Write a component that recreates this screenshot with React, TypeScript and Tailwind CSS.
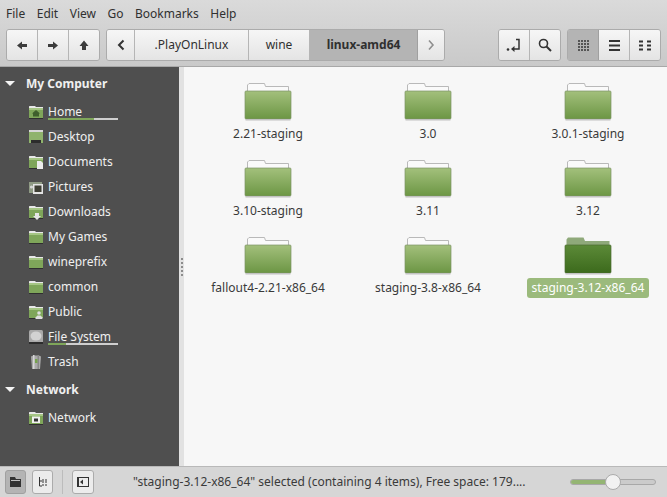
import React from "react";

const font = { fontFamily: '"Noto Sans", sans-serif' };

function Folder({ selected = false }: { selected?: boolean }) {
  const id = selected ? "fs" : "fn";
  return (
    <svg width="48" height="38" viewBox="0 0 48 38" className="block">
      <defs>
        <linearGradient id={id} x1="0" y1="0" x2="0" y2="1">
          <stop offset="0" stopColor={selected ? "#5c8a38" : "#a3c07c"} />
          <stop offset="1" stopColor={selected ? "#3c6a1c" : "#6c9644"} />
        </linearGradient>
      </defs>
      {selected ? (
        <path d="M2.5 9V2.5L4 0.5H19.5L21 4H45.5V9Z" fill="#8fa97a" />
      ) : (
        <path d="M3.5 9V2L5 0.5H20.5L21.5 3.5H44.5V9Z" fill="#fafafa" stroke="#b9b9b9" strokeWidth="1" />
      )}
      <rect x="1" y="8" width="46" height="28" rx="1" fill={`url(#${id})`} stroke={selected ? "#4a6b30" : "#7c9464"} strokeWidth="0.7" />
      <rect x="1.5" y="36" width="45" height="1.5" fill="#c2c2c2" />
    </svg>
  );
}

function SideFolder({ overlay }: { overlay?: React.ReactNode }) {
  return (
    <svg width="16" height="16" viewBox="0 0 16 16" className="block shrink-0">
      <path d="M1 5V2.5L1.5 2H7L8 3H15V5Z" fill="#e8e8e8" />
      <rect x="1" y="4" width="14" height="10" fill="#7fa65a" />
      <rect x="1" y="4" width="14" height="2" fill="#a5c584" />
      <rect x="1" y="14" width="14" height="1" fill="#2f2f2f" />
      {overlay}
    </svg>
  );
}

const icons: Record<string, React.ReactNode> = {
  Home: <SideFolder overlay={<path d="M8 6L12 9.5H11V12.5H5V9.5H4Z" fill="#3f5f2c" />} />,
  Desktop: (
    <svg width="16" height="16" viewBox="0 0 16 16" className="block shrink-0">
      <rect x="1" y="1" width="14" height="2" fill="#d6d6d6" />
      <rect x="1" y="3" width="14" height="11" fill="#8fb36c" />
      <rect x="3" y="11" width="10" height="3" fill="#2c2c2c" />
    </svg>
  ),
  Documents: <SideFolder overlay={<path d="M9 7H13L15 9V15H9Z" fill="#ececec" />} />,
  Pictures: (
    <svg width="16" height="16" viewBox="0 0 16 16" className="block shrink-0">
      <rect x="1" y="3" width="13" height="11" fill="#8f9a84" />
      <rect x="5" y="5" width="10" height="10" fill="#e4e4e4" />
      <rect x="6.5" y="6.5" width="7" height="6.5" fill="#3e3e34" />
      <circle cx="3.5" cy="8" r="1.6" fill="#d8d8d8" />
    </svg>
  ),
  Downloads: <SideFolder overlay={<path d="M7 9H11V12H13L9 16L5 12H7Z" fill="#e6e6e6" />} />,
  "My Games": <SideFolder />,
  wineprefix: <SideFolder />,
  common: <SideFolder />,
  Public: <SideFolder overlay={<g fill="#dedede"><circle cx="11" cy="9" r="1.8" /><path d="M7.5 15V13.5L9.5 11.5H12.5L14.5 13.5V15Z" /></g>} />,
  "File System": (
    <svg width="16" height="16" viewBox="0 0 16 16" className="block shrink-0">
      <rect x="1" y="1" width="14" height="14" rx="1.5" fill="#a9a9a9" />
      <ellipse cx="8" cy="7" rx="5.5" ry="4.5" fill="#d2d2d2" />
      <rect x="1" y="13" width="14" height="2" fill="#2c2c2c" />
    </svg>
  ),
  Trash: (
    <svg width="16" height="16" viewBox="0 0 16 16" className="block shrink-0">
      <path d="M3 2.5C3 1 13 1 13 2.5L12 15H4Z" fill="#a9a9a9" />
      <rect x="5" y="1" width="1.5" height="14" fill="#d6d6d6" />
      <rect x="9.5" y="1" width="1.5" height="14" fill="#888888" />
      <rect x="7" y="5" width="2.5" height="4" fill="#76a24e" />
    </svg>
  ),
  Network: <SideFolder overlay={<g><rect x="4" y="6.5" width="8" height="6.5" fill="#f0f0f0" /><rect x="6" y="8.5" width="4" height="3" fill="#333" /></g>} />,
};

function Row({ label, usage }: { label: string; usage?: number }) {
  return (
    <div className="relative flex h-[25px] items-center gap-[4px] pl-[28px] text-[12px] text-[#f0f0f0]">
      {icons[label]}
      <span>{label}</span>
      {usage !== undefined && (
        <div className="absolute left-[48px] top-[19px] flex h-[2px] w-[70px] bg-[#cfcfcf]">
          <div className="h-full bg-[#7fa65a]" style={{ width: `${usage}%` }} />
        </div>
      )}
    </div>
  );
}

function Header({ label, className = "" }: { label: string; className?: string }) {
  return (
    <div className={`flex h-[25px] items-center text-[12px] font-bold text-[#f0f0f0] ${className}`}>
      <svg width="14" height="8" viewBox="0 0 14 8" className="ml-[4px] mr-[8px]">
        <path d="M1 1H11L6 6Z" fill="#f4f4f4" />
      </svg>
      {label}
    </div>
  );
}

const btn =
  "flex h-full items-center justify-center border-r border-[#b5b5b5] last:border-r-0 bg-gradient-to-b from-[#f6f6f6] to-[#e4e4e4]";
const group = "flex h-[32px] overflow-hidden rounded-[3px] border border-[#ababab]";
const active = "flex h-full items-center justify-center border-r border-[#a0a0a0] bg-[#b4b4b4]";

const items = [
  "2.21-staging",
  "3.0",
  "3.0.1-staging",
  "3.10-staging",
  "3.11",
  "3.12",
  "fallout4-2.21-x86_64",
  "staging-3.8-x86_64",
  "staging-3.12-x86_64",
];

const Dots = () => (
  <svg width="11" height="11" viewBox="0 0 11 11">
    {[0, 3, 6, 9].map((y) =>
      [0, 3, 6, 9].map((x) => <rect key={`${x}-${y}`} x={x} y={y} width="2" height="2" fill="#555" />)
    )}
  </svg>
);

export default function App() {
  return (
    <div className="flex h-[497px] w-[667px] flex-col overflow-hidden bg-[#d6d6d6] text-[#303030]" style={font}>
      <div className="h-[67px] shrink-0 border-b border-[#a8a8a8] bg-gradient-to-b from-[#dadada] to-[#c9c9c9]">
        <div className="flex h-[28px] items-center gap-[11.5px] pl-[6px] pb-[1px] text-[12px]">
          {["File", "Edit", "View", "Go", "Bookmarks", "Help"].map((m) => (
            <span key={m}>{m}</span>
          ))}
        </div>
        <div className="flex items-center pl-[6px] pt-[1px]">
          <div className={`${group} w-[94px]`}>
            {[
              "M10 3.5V6H15V9H10V11.5L5 7.5Z",
              "M10 3.5V6H5V9H10V11.5L15 7.5Z",
              "M10 2.5L14.5 8H12V12H8V8H5.5Z",
            ].map((d) => (
              <div key={d} className={`${btn} flex-1`}>
                <svg width="20" height="15" viewBox="0 0 20 15"><path d={d} fill="#3c3c3c" /></svg>
              </div>
            ))}
          </div>
          <div className={`${group} ml-[6px] w-[339px] text-[12px]`}>
            <div className={`${btn} w-[28px]`}>
              <svg width="10" height="12" viewBox="0 0 10 12"><path d="M7.5 1.5L3 6L7.5 10.5" fill="none" stroke="#333" strokeWidth="2" /></svg>
            </div>
            <div className={`${btn} w-[114px]`}>.PlayOnLinux</div>
            <div className={`${btn} w-[61px]`}>wine</div>
            <div className={`${active} w-[108px] font-bold`}>linux-amd64</div>
            <div className={`${btn} flex-1`}>
              <svg width="10" height="12" viewBox="0 0 10 12"><path d="M3 1.5L7 6L3 10.5" fill="none" stroke="#8f8f8f" strokeWidth="1.6" /></svg>
            </div>
          </div>
          <div className={`${group} ml-[53px] w-[63px]`}>
            <div className={`${btn} flex-1`}>
              <svg width="16" height="16" viewBox="0 0 16 16" fill="none">
                <path d="M10 2.5H13V12H6" stroke="#333" strokeWidth="1.5" />
                <path d="M8.5 9V15L5 12Z" fill="#333" />
                <circle cx="2" cy="12.5" r="1.3" fill="#333" />
              </svg>
            </div>
            <div className={`${btn} flex-1`}>
              <svg width="16" height="16" viewBox="0 0 16 16" fill="none">
                <circle cx="6.5" cy="6.5" r="4" stroke="#333" strokeWidth="1.6" />
                <path d="M9.5 9.5L14 14" stroke="#333" strokeWidth="2" />
              </svg>
            </div>
          </div>
          <div className={`${group} ml-[6px] w-[94px]`}>
            <div className={`${active} flex-1`}><Dots /></div>
            <div className={`${btn} flex-1`}>
              <svg width="11" height="11" viewBox="0 0 11 11"><path d="M0 1H11M0 5.5H11M0 10H11" stroke="#333" strokeWidth="2" /></svg>
            </div>
            <div className={`${btn} flex-1`}>
              <svg width="13" height="11" viewBox="0 0 13 11"><path d="M0 1.5H4M8 1.5H12M0 5.5H4M8 5.5H12M0 9.5H4M8 9.5H12" stroke="#333" strokeWidth="2" /></svg>
            </div>
          </div>
        </div>
      </div>

      <div className="flex min-h-0 flex-1">
        <div className="w-[179px] shrink-0 bg-[#4f4f4f] pt-[4px]">
          <Header label="My Computer" />
          <div className="mt-[3px]">
            <Row label="Home" usage={65} />
            <Row label="Desktop" />
            <Row label="Documents" />
            <Row label="Pictures" />
            <Row label="Downloads" />
            <Row label="My Games" />
            <Row label="wineprefix" />
            <Row label="common" />
            <Row label="Public" />
            <Row label="File System" usage={26} />
            <Row label="Trash" />
          </div>
          <Header label="Network" className="mt-[3px]" />
          <div className="mt-[3px]">
            <Row label="Network" />
          </div>
        </div>
        <div className="flex w-[5px] shrink-0 flex-col items-center justify-center gap-[2px] bg-[#e2e2e2]">
          {[0, 1, 2, 3, 4].map((i) => (
            <div key={i} className="h-[2px] w-[2px] bg-[#8c8c8c]" />
          ))}
        </div>
        <div className="grid flex-1 grid-cols-[160px_160px_160px] auto-rows-[77px] content-start bg-[#f7f7f7] pl-[4px] pt-[16px] text-[12px]">
          {items.map((name, i) => (
            <div key={name} className="flex flex-col items-center">
              <Folder selected={i === 8} />
              <div className={`mt-[3px] flex h-[20px] items-center rounded-[3px] px-[5px] ${i === 8 ? "bg-[#9bba7c] text-white" : "text-[#3a3a3a]"}`}>
                {name}
              </div>
            </div>
          ))}
        </div>
      </div>

      <div className="flex h-[31px] shrink-0 items-center border-t border-[#b9b9b9] bg-[#d6d6d6] pl-[5px] text-[12px]">
        <div className="flex h-[24px] w-[21px] items-center justify-center rounded-[3px] border border-[#a0a0a0] bg-[#b4b4b4]">
          <svg width="12" height="10" viewBox="0 0 12 10"><path d="M0 0H5L6 2H11V10H0Z" fill="#333" /><rect x="1" y="3" width="9" height="1" fill="#c0c0c0" /></svg>
        </div>
        <div className="ml-[6px] flex h-[24px] w-[21px] items-center justify-center rounded-[3px] border border-[#ababab] bg-[#ececec]">
          <svg width="12" height="12" viewBox="0 0 12 12" fill="none"><path d="M2.5 1V10H5M2.5 5H5" stroke="#333" /><path d="M5 4H11M5 6H11M5 9H11" stroke="#333" strokeDasharray="2 1" /></svg>
        </div>
        <div className="ml-[9px] h-[24px] w-px bg-[#bcbcbc]" />
        <div className="ml-[9px] flex h-[24px] w-[22px] items-center justify-center rounded-[3px] border border-[#ababab] bg-[#ececec]">
          <svg width="12" height="10" viewBox="0 0 12 10" fill="none"><rect x="0.5" y="0.5" width="11" height="9" stroke="#333" /><path d="M6 2.5V7.5L3 5Z" fill="#333" /><rect x="1" y="1" width="1" height="8" fill="#333" /></svg>
        </div>
        <div className="ml-[39px] w-[437px] shrink-0 whitespace-nowrap text-[#3a3a3a]">"staging-3.12-x86_64" selected (containing 4 items), Free space: 179....</div>
        <div className="relative h-[6px] w-[86px] shrink-0">
          <div className="flex h-full w-full overflow-hidden rounded-full border border-[#a8a8a8] bg-[#cbcbcb]">
            <div className="h-full w-[36px] bg-[#94b573]" />
          </div>
          <div className="absolute left-[35px] top-[-5px] h-[16px] w-[16px] rounded-full border border-[#ababab] bg-[#f2f2f2]" />
        </div>
      </div>
    </div>
  );
}
